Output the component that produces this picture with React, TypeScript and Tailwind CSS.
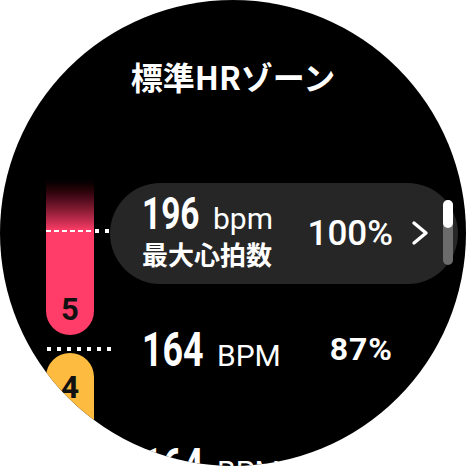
import React from "react";

const roboto = "[font-family:Roboto,'Liberation_Sans',sans-serif]";
const cjk = "[font-family:'Noto_Sans_CJK_JP','Noto_Sans',sans-serif]";

type Row = {
  bpm: string;
  unit: string;
  pct: string;
  label?: string;
  active?: boolean;
};

const rows: Row[] = [
  { bpm: "196", unit: "bpm", pct: "100%", label: "最大心拍数", active: true },
  { bpm: "164", unit: "BPM", pct: "87%" },
  { bpm: "164", unit: "BPM", pct: "80%" },
];

function Chevron() {
  return (
    <svg width="18" height="26" viewBox="0 0 18 26" className="ml-[18px]">
      <polyline
        points="3,3 15,13 3,23"
        fill="none"
        stroke="white"
        strokeWidth="3.4"
        strokeLinecap="round"
        strokeLinejoin="round"
      />
    </svg>
  );
}

function RowContent({ row }: { row: Row }) {
  return (
    <div className="flex items-center w-full">
      <div className={`flex flex-col ${row.active ? "mb-[8px]" : ""}`}>
        <div className="flex items-baseline text-white">
          {row.active ? (
            <span className="inline-block w-[57px]">
              <span className={`inline-block origin-left scale-x-[0.76] whitespace-nowrap text-[44px] leading-none font-bold ${roboto}`}>
                {row.bpm}
              </span>
            </span>
          ) : (
            <span className="inline-block w-[61px]">
              <span className={`inline-block origin-left scale-x-[0.73] whitespace-nowrap text-[49px] leading-none font-bold ${roboto}`}>
                {row.bpm}
              </span>
            </span>
          )}
          <span className={`ml-[14px] text-[30px] leading-none font-normal ${roboto}`}>{row.unit}</span>
        </div>
        {row.label && (
          <div className={`mt-[5px] text-[26px] leading-none font-bold text-white ${cjk}`}>{row.label}</div>
        )}
      </div>
      <div className="ml-auto flex items-center">
        <span
          className={`text-white leading-none ${roboto} ${
            row.active ? "text-[35px] font-medium" : "text-[32px] font-bold tracking-[1px]"
          }`}
        >
          {row.pct}
        </span>
      </div>
      <div className="w-[65px] flex items-center">{row.active && <Chevron />}</div>
    </div>
  );
}

export default function App() {
  return (
    <div className="w-[466px] h-[466px] bg-white">
      <div className="relative w-full h-full rounded-full bg-black overflow-hidden flex flex-col">
        <div className="h-[175px] shrink-0 pt-[56px]">
          <h1 className={`text-center text-white text-[32px] leading-[40px] font-bold ${cjk}`}>標準HRゾーン</h1>
        </div>

        <div className="relative flex pl-[46px]">
          {/* zone scale */}
          <div className="w-[48px] shrink-0 flex flex-col">
            <div className="h-[56px] bg-linear-to-b from-[#000000] to-[#ff3d68]" />
            <div className="h-[104px] bg-[#ff3d68] rounded-b-full flex items-end justify-center pb-[10px]">
              <span className={`text-[31px] leading-none font-bold text-[#111] ${roboto}`}>5</span>
            </div>
            <div className="mt-[18px] h-[220px] bg-[#fdbc40] rounded-t-full flex justify-center pt-[18px]">
              <span className={`text-[32px] leading-none font-bold text-[#111] ${roboto}`}>4</span>
            </div>
          </div>

          {/* rows */}
          <div className="ml-[16px] flex flex-col">
            {rows.map((row, i) => (
              <div key={i} className="h-[116px] flex items-center">
                {row.active ? (
                  <div className="w-[348px] h-[101px] rounded-full bg-[#262626] flex items-center pl-[32px]">
                    <RowContent row={row} />
                  </div>
                ) : (
                  <div className="w-[348px] flex items-center pl-[32px]">
                    <RowContent row={row} />
                  </div>
                )}
              </div>
            ))}
          </div>

          {/* dotted boundaries */}
          <div className="absolute left-[46px] top-[55px] w-[48px] h-[2px] bg-[repeating-linear-gradient(90deg,#ffffff_0_5px,transparent_5px_8px)]" />
          <div className="absolute left-[95px] top-[54px] w-[16px] h-[4px] bg-[repeating-linear-gradient(90deg,#ffffff_0_4px,transparent_4px_10px)]" />
          <div className="absolute left-[47px] top-[172px] w-[64px] h-[4px] bg-[repeating-linear-gradient(90deg,#ffffff_0_4px,transparent_4px_10px)]" />
        </div>

        {/* scroll indicator */}
        <div className="absolute left-[443px] top-[200px] w-[10px] h-[65px] rounded-full bg-[#6b6b6b]">
          <div className="h-[28px] rounded-full bg-white" />
        </div>
      </div>
    </div>
  );
}
